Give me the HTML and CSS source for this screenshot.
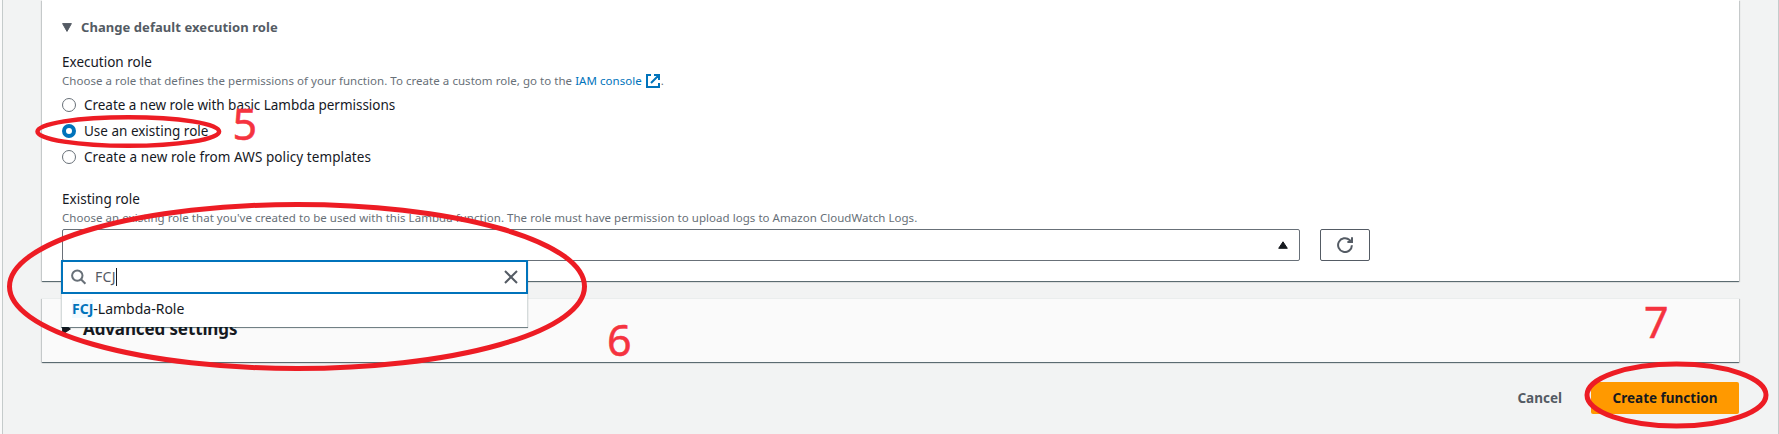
FILE: index.html
```html
<!DOCTYPE html>
<html lang="en">
<head>
<meta charset="utf-8">
<title>Create function</title>
<link rel="stylesheet" href="styles.css">
</head>
<body>
<main class="page">
  <section class="card role-card">
    <h3 class="expander"><svg width="10" height="9" viewBox="0 0 10 9"><path d="M.6.6h8.8L5 8.4z" fill="#545b64" stroke="#545b64" stroke-linejoin="round"/></svg><span>Change default execution role</span></h3>
    <div class="label">Execution role</div>
    <p class="hint">Choose a role that defines the permissions of your function. To create a custom role, go to the <a class="link">IAM console</a><svg class="ext" width="14" height="14" viewBox="0 0 14 14" fill="none" stroke="#0073bb" stroke-width="2"><path d="M5 1H1v12h12V9M8 1h5v5M13 1L5 9"/></svg>.</p>
    <div class="radios">
      <label class="radio"><i class="dot"></i><span class="opt-new">Create a new role with basic Lambda permissions</span></label>
      <label class="radio"><i class="dot on"></i><span>Use an existing role</span></label>
      <label class="radio"><i class="dot"></i><span class="opt-template">Create a new role from AWS policy templates</span></label>
    </div>
    <div class="label existing">Existing role</div>
    <p class="hint">Choose an existing role that you've created to be used with this Lambda function. The role must have permission to upload logs to Amazon CloudWatch Logs.</p>
    <div class="row">
      <div class="select">
        <svg width="10" height="8" viewBox="0 0 10 8"><path d="M5 .8L9.3 7.3H.7z" fill="#16191f" stroke="#16191f" stroke-linejoin="round"/></svg>
        <div class="dropdown">
          <div class="search">
            <svg width="16" height="16" viewBox="0 0 16 16" fill="none" stroke="#687078" stroke-width="2"><circle cx="6.3" cy="6.6" r="5.2"/><path d="M9.9 10.3l4.5 4.4"/></svg>
            <span class="query">FCJ</span><i class="caret"></i>
            <svg class="clear" width="14" height="14" viewBox="0 0 14 14" fill="none" stroke="#545b64" stroke-width="2"><path d="M1 1l12 12M13 1L1 13"/></svg>
          </div>
          <div class="option"><b>FCJ</b>-Lambda-Role</div>
        </div>
      </div>
      <button class="refresh"><svg width="16" height="16" viewBox="0 0 16 16" fill="none" stroke="#545b64" stroke-width="2"><path d="M14.9 8.2A6.9 6.9 0 1 1 12.6 3L14 4.6"/><path d="M15 .2V5h-4.6" /></svg></button>
    </div>
  </section>
  <section class="card advanced"><svg width="9" height="12" viewBox="0 0 9 12"><path d="M.6.8v10.4L8.4 6z" fill="#16191f" stroke="#16191f" stroke-linejoin="round"/></svg><h2>Advanced settings</h2></section>
  <footer class="actions"><span class="cancel">Cancel</span><button class="primary">Create function</button></footer>
  <svg class="marks" width="1779" height="434" viewBox="0 0 1779 434">
    <g fill="none" stroke="#ed1c24" stroke-width="5"><ellipse cx="128.3" cy="131.5" rx="90.8" ry="14.3" stroke-width="4.5"/><ellipse cx="297" cy="286.5" rx="287.5" ry="82"/><ellipse cx="1676.5" cy="395" rx="89.5" ry="31"/></g>
    <g class="nums"><text x="232.5" y="139.5">5</text><text x="607" y="355.5">6</text><text x="1644" y="337.5">7</text></g>
  </svg>
</main>
</body>
</html>
```
FILE: styles.css
```css
* { box-sizing: border-box; }
body { margin: 0; background: #f2f3f3; color: #16191f; font: 13.5px/22px "Noto Sans", sans-serif; }
h2, h3, p { margin: 0; }
.page { position: relative; width: 1779px; height: 434px; padding: 0 39px 0 40px; border-left: 2px solid #fafafa; border-right: 1px solid #c5cbcb; overflow: hidden; box-shadow: inset 1px 0 #c5cbcb; }
.card { width: 1697px; padding: 0 20px; box-shadow: 0 1px 0 rgba(0,28,36,.3), 0 1px 1px rgba(0,28,36,.25), 1px 1px 1px rgba(0,28,36,.15), -1px 1px 1px rgba(0,28,36,.15); }
.role-card { height: 281px; background: #fff; padding-top: 16px; }
.expander { display: flex; align-items: center; gap: 9px; font-size: 13px; line-height: 22px; color: #545b64; letter-spacing: .06px; }
.label { line-height: 20px; margin-top: 14px; }
.label.existing { margin-top: 21px; letter-spacing: .02px; }
.hint { font-size: 11.5px; line-height: 18px; color: #687078; letter-spacing: .04px; }
.link { color: #0073bb; }
.ext { margin: 0 1px 0 4px; vertical-align: -3px; }
.radios { display: flex; flex-direction: column; gap: 4px; margin-top: 4px; }
.radio { display: flex; align-items: center; gap: 8px; height: 22px; }
.opt-new { letter-spacing: -.03px; }
.opt-template { letter-spacing: .08px; }
.dot { width: 14px; height: 14px; border: 1px solid #687078; border-radius: 50%; background: #fff; }
.dot.on { border: 4px solid #0073bb; }
.row { display: flex; gap: 20px; margin-top: 2px; }
.select { position: relative; width: 1238px; height: 32px; border: 1px solid #687078; border-radius: 2px; display: flex; align-items: center; justify-content: flex-end; padding-right: 11px; }
.refresh { width: 50px; height: 32px; border: 1px solid #545b64; border-radius: 2px; background: #fff; padding: 0; display: grid; place-items: center; }
.dropdown { position: absolute; left: -2px; top: 30px; z-index: 1; width: 467px; height: 67px; background: #fff; font-size: 14px; box-shadow: 0 1px 0 rgba(0,28,36,.35), 0 1px 1px rgba(0,28,36,.3); }
.search { height: 34px; border: 2px solid #0073bb; display: flex; align-items: center; padding: 0 8px; color: #545b64; }
.query { margin-left: 8px; letter-spacing: .3px; }
.caret { width: 1px; height: 18px; background: #16191f; }
.clear { margin-left: auto; }
.option { padding: 4px 10px; border-left: 1px solid #d5dbdb; border-right: 1px solid #d5dbdb; height: 33px; }
.option b { color: #0073bb; background: #f1faff; }
.advanced { margin-top: 17px; height: 64px; background: #fafafa; border-top: 1px solid #eaeded; padding-bottom: 3px; display: flex; align-items: center; gap: 12px; }
h2 { font-size: 17px; letter-spacing: -.12px; }
.actions { display: flex; justify-content: flex-end; align-items: center; margin-top: 20px; font-weight: 700; height: 32px; }
.cancel { color: #545b64; margin-right: 29px; }
.primary { width: 148px; height: 32px; background: #ff9900; border: 0; border-radius: 2px; font: inherit; color: #16191f; padding: 0; }
.marks { position: absolute; z-index: 2; left: -2px; top: 0; }
.nums { font-size: 43px; fill: #f5333f; stroke: #f5333f; stroke-width: .5px; }
```
